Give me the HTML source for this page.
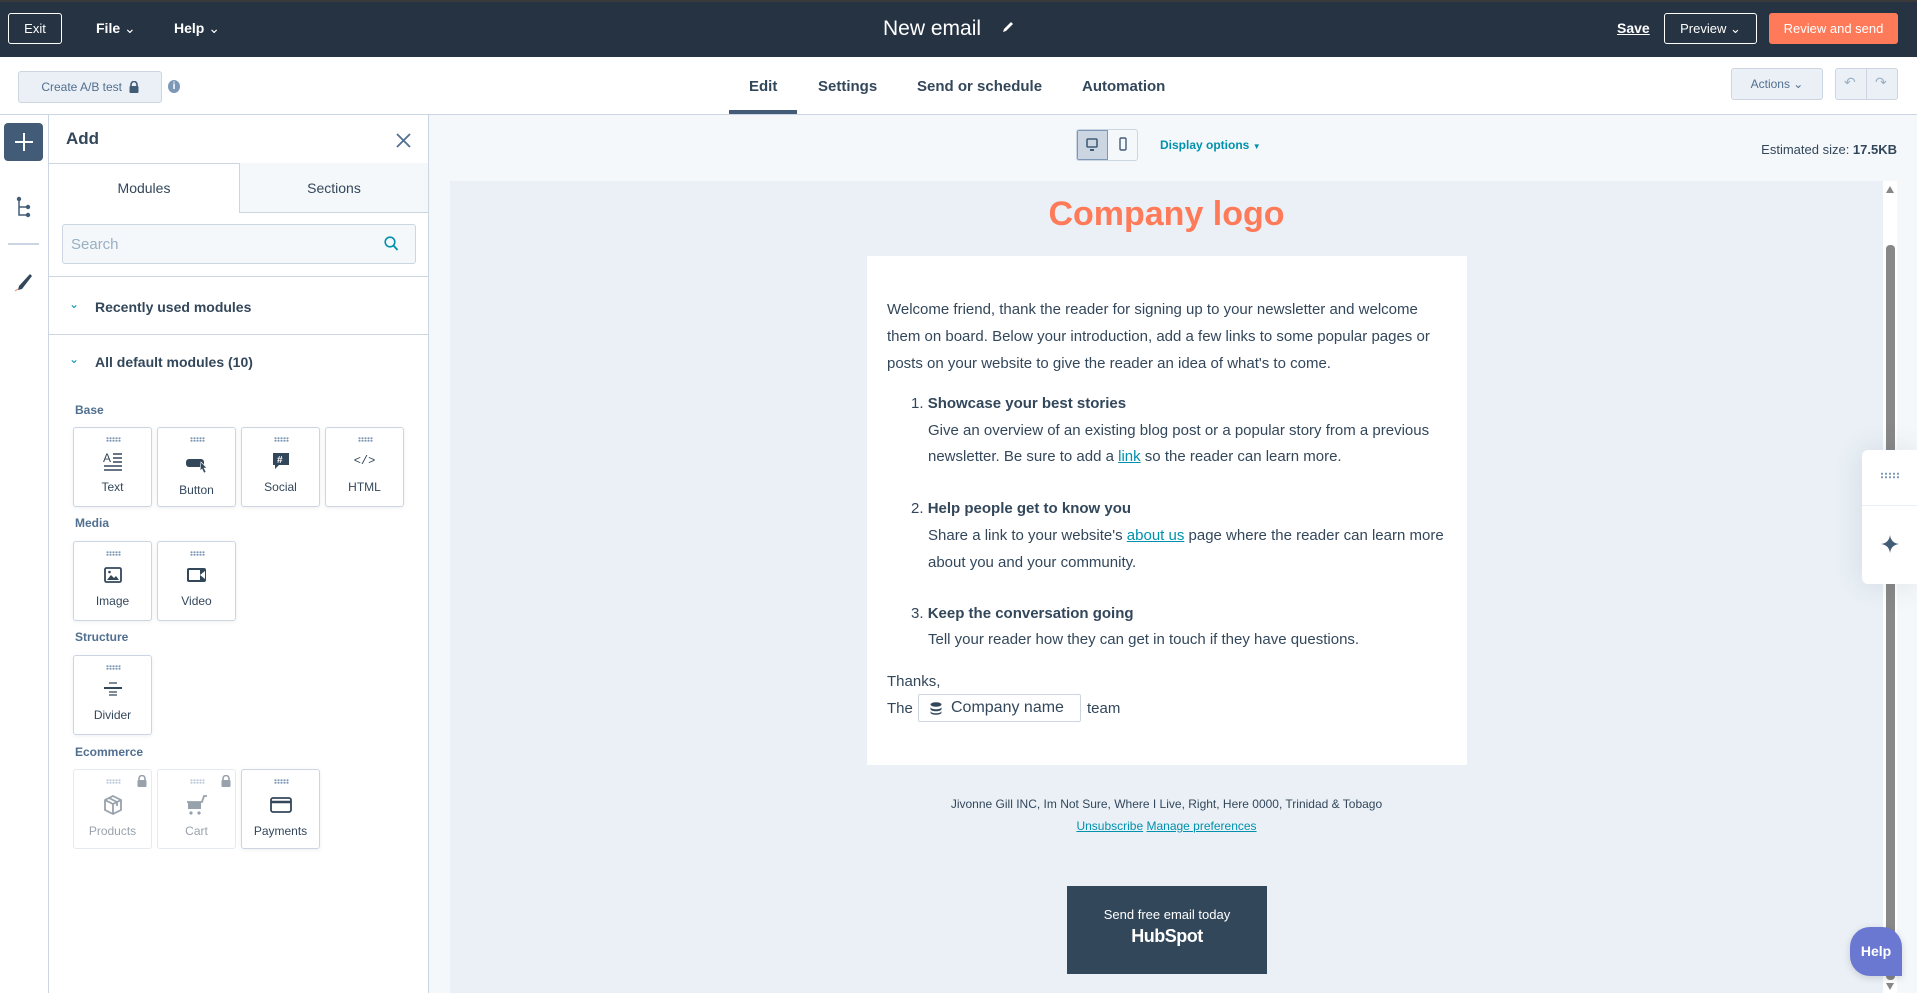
<!DOCTYPE html>
<html><head><meta charset="utf-8"><style>
*{box-sizing:border-box;margin:0;padding:0}
body{width:1917px;height:993px;overflow:hidden;position:relative;font-family:"Liberation Sans",sans-serif;color:#33475b;background:#f5f8fa}
.a{position:absolute}
.top{left:0;top:0;width:1917px;height:57px;background:#253342;border-top:2px solid #3a3a3a}
.btnw{border:1px solid #fff;border-radius:3px;color:#fff;font-size:13px;display:flex;align-items:center;justify-content:center}
.sub{left:0;top:57px;width:1917px;height:58px;background:#fff;border-bottom:1px solid #cbd6e2}
.tab{top:77px;font-size:15px;font-weight:bold;color:#33475b}
.tile{width:79px;height:80px;border:1px solid #cbd6e2;border-radius:3px;background:#fff;box-shadow:0 1px 4px rgba(45,62,80,.08)}
.tile .d{position:absolute;left:32px;top:9px;width:15px;height:5px;background-image:radial-gradient(circle,#7c98b6 0.9px,transparent 1.1px);background-size:3px 2.5px}
.tile .ic{position:absolute;left:0;width:77px;top:20px;height:26px;display:flex;align-items:center;justify-content:center}
.tile .l{position:absolute;left:0;width:77px;text-align:center;font-size:12px;top:52px;color:#33475b}
.lab{left:75px;font-size:12px;font-weight:bold;color:#516f90}
.ln{position:absolute;left:20px;font-size:15px;line-height:26px;white-space:nowrap;color:#33475b}
.ln.i{left:61px}
a{color:#0091ae;text-decoration:underline}
</style></head><body>
<div class="a top"></div>
<div class="a btnw" style="left:8px;top:13px;width:54px;height:31px">Exit</div>
<div class="a" style="left:96px;top:20px;color:#fff;font-size:14px;font-weight:bold">File <span style="font-weight:normal">&#8964;</span></div>
<div class="a" style="left:174px;top:20px;color:#fff;font-size:14px;font-weight:bold">Help <span style="font-weight:normal">&#8964;</span></div>
<div class="a" style="left:883px;top:17px;color:#fff;font-size:21px">New email</div>
<svg class="a" style="left:1001px;top:20px" width="14" height="14" viewBox="0 0 14 14"><path d="M2 12l1-3 7-7 2 2-7 7z" fill="#fff"/></svg>
<div class="a" style="left:1617px;top:20px;color:#fff;font-size:14px;font-weight:bold;text-decoration:underline">Save</div>
<div class="a btnw" style="left:1664px;top:13px;width:93px;height:31px">Preview &#8964;</div>
<div class="a" style="left:1769px;top:13px;width:129px;height:31px;background:#ff7a59;border-radius:3px;color:#fff;font-size:13px;display:flex;align-items:center;justify-content:center">Review and send</div>

<div class="a sub"></div>
<div class="a" style="left:18px;top:71px;width:144px;height:32px;background:#eaf0f6;border:1px solid #cbd6e2;border-radius:3px;font-size:12px;color:#516f90;display:flex;align-items:center;justify-content:center">Create A/B test &nbsp;<svg width="10" height="12" viewBox="0 0 10 12"><path d="M2 5V3.5a3 3 0 016 0V5" stroke="#425b76" stroke-width="1.6" fill="none"/><rect x="0.5" y="5" width="9" height="7" rx="1" fill="#425b76"/></svg></div>
<div class="a" style="left:168px;top:80px;width:12px;height:13px;border-radius:50%;background:#7c98b6;color:#fff;font-size:10px;font-weight:bold;text-align:center;line-height:13px">i</div>
<div class="a tab" style="left:749px;top:78px">Edit</div>
<div class="a" style="left:729px;top:110px;width:68px;height:4px;background:#425b76"></div>
<div class="a tab" style="left:818px;top:78px">Settings</div>
<div class="a tab" style="left:917px;top:78px">Send or schedule</div>
<div class="a tab" style="left:1082px;top:78px">Automation</div>
<div class="a" style="left:1731px;top:68px;width:92px;height:32px;background:#eaf0f6;border:1px solid #cbd6e2;border-radius:3px;font-size:12px;color:#516f90;display:flex;align-items:center;justify-content:center">Actions &#8964;</div>
<div class="a" style="left:1835px;top:68px;width:63px;height:32px;background:#eaf0f6;border:1px solid #cbd6e2;border-radius:3px"></div>
<div class="a" style="left:1866px;top:68px;width:1px;height:32px;background:#cbd6e2"></div>
<div class="a" style="left:1844px;top:74px;font-size:14px;color:#99afc4">&#8630;</div>
<div class="a" style="left:1875px;top:74px;font-size:14px;color:#99afc4">&#8631;</div>

<!-- rail -->
<div class="a" style="left:0;top:115px;width:49px;height:878px;background:#fff;border-right:1px solid #cbd6e2"></div>
<div class="a" style="left:4px;top:123px;width:39px;height:38px;background:#425b76;border-radius:4px"></div>
<svg class="a" style="left:14px;top:132px" width="20" height="20" viewBox="0 0 20 20"><path d="M10 1v18M1 10h18" stroke="#fff" stroke-width="2"/></svg>
<svg class="a" style="left:16px;top:196px" width="16" height="22" viewBox="0 0 16 22"><path d="M3 2v17h9M3 11h9" stroke="#425b76" stroke-width="1.5" fill="none"/><circle cx="3" cy="3" r="2.2" fill="#425b76"/><circle cx="12" cy="11" r="2.2" fill="#425b76"/><circle cx="12" cy="19" r="2.2" fill="#425b76"/></svg>
<div class="a" style="left:8px;top:243px;width:31px;height:2px;background:#cbd6e2"></div>
<svg class="a" style="left:13px;top:272px" width="20" height="20" viewBox="0 0 20 20"><path d="M17 2L6 14l-1 4 4-1L19 4z" fill="#33475b"/><path d="M2 19l3-2" stroke="#ff7a59" stroke-width="1"/></svg>

<!-- panel -->
<div class="a" style="left:49px;top:115px;width:380px;height:878px;background:#fff;border-right:1px solid #cbd6e2"></div>
<div class="a" style="left:66px;top:129px;font-size:17px;font-weight:bold;color:#33475b">Add</div>
<svg class="a" style="left:396px;top:133px" width="15" height="15" viewBox="0 0 15 15"><path d="M1 1l13 13M14 1L1 14" stroke="#516f90" stroke-width="1.8"/></svg>
<div class="a" style="left:49px;top:163px;width:379px;height:1px;background:#cbd6e2"></div>
<div class="a" style="left:49px;top:164px;width:190px;height:49px;font-size:14px;text-align:center;line-height:49px;color:#33475b">Modules</div>
<div class="a" style="left:239px;top:163px;width:189px;height:50px;background:#f5f8fa;border-left:1px solid #cbd6e2;border-bottom:1px solid #cbd6e2;font-size:14px;text-align:center;line-height:50px;color:#33475b">Sections</div>
<div class="a" style="left:62px;top:224px;width:354px;height:40px;background:#f5f8fa;border:1px solid #cbd6e2;border-radius:3px;font-size:15px;color:#99afc4;padding-left:8px;line-height:39px">Search</div>
<svg class="a" style="left:384px;top:236px" width="15" height="16" viewBox="0 0 15 16"><circle cx="6" cy="6" r="4.8" stroke="#0091ae" stroke-width="1.6" fill="none"/><path d="M9.5 9.5L13.5 14" stroke="#0091ae" stroke-width="1.8"/></svg>
<div class="a" style="left:49px;top:276px;width:379px;height:1px;background:#cbd6e2"></div>
<div class="a" style="left:69px;top:297px;font-size:12px;color:#0091ae">&#8964;</div>
<div class="a" style="left:95px;top:299px;font-size:14px;font-weight:bold">Recently used modules</div>
<div class="a" style="left:49px;top:334px;width:379px;height:1px;background:#cbd6e2"></div>
<div class="a" style="left:69px;top:352px;font-size:12px;color:#0091ae">&#8964;</div>
<div class="a" style="left:95px;top:354px;font-size:14px;font-weight:bold">All default modules (10)</div>

<div class="a lab" style="top:403px">Base</div>
<div class="a tile" style="left:73px;top:427px"><div class="d"></div><div class="ic"><svg width="20" height="20" viewBox="0 0 20 20"><text x="0" y="11" font-size="12" font-family="Liberation Sans" fill="#33475b">A</text><path d="M10 3h9M10 7h9M10 11h9M1 15h18M1 19h18" stroke="#33475b" stroke-width="1.4"/></svg></div><div class="l">Text</div></div>
<div class="a tile" style="left:157px;top:427px"><div class="d"></div><div class="ic" style="top:24px"><svg width="24" height="18" viewBox="0 0 24 18"><rect x="1" y="3" width="18" height="8" rx="3" fill="#33475b"/><path d="M16 6l6 6-3 0 2 4-2 1-2-4-2 2z" fill="#33475b" stroke="#fff" stroke-width=".6"/></svg></div><div class="l" style="top:55px">Button</div></div>
<div class="a tile" style="left:241px;top:427px"><div class="d"></div><div class="ic"><svg width="20" height="20" viewBox="0 0 20 20"><path d="M2 2h16v12H8l-4 4v-4H2z" fill="#33475b"/><text x="6" y="12" font-size="10" font-family="Liberation Sans" font-weight="bold" fill="#fff">#</text></svg></div><div class="l">Social</div></div>
<div class="a tile" style="left:325px;top:427px"><div class="d"></div><div class="ic" style="font-size:12px;font-family:'Liberation Mono',monospace;color:#33475b">&lt;/&gt;</div><div class="l">HTML</div></div>

<div class="a lab" style="top:516px">Media</div>
<div class="a tile" style="left:73px;top:541px"><div class="d"></div><div class="ic"><svg width="18" height="16" viewBox="0 0 18 16"><rect x="1" y="1" width="16" height="14" rx="1.5" stroke="#33475b" stroke-width="1.8" fill="none"/><path d="M3 13l4-5 3 3 2-2 3 4z" fill="#33475b"/><circle cx="5.5" cy="5" r="1.3" fill="#33475b"/></svg></div><div class="l">Image</div></div>
<div class="a tile" style="left:157px;top:541px"><div class="d"></div><div class="ic"><svg width="21" height="16" viewBox="0 0 21 16"><rect x="1" y="1" width="19" height="14" rx="2" fill="#33475b"/><rect x="3" y="3" width="11" height="10" fill="#fff"/><path d="M14 8l5-4v8z" fill="#fff"/></svg></div><div class="l">Video</div></div>

<div class="a lab" style="top:630px">Structure</div>
<div class="a tile" style="left:73px;top:655px"><div class="d"></div><div class="ic"><svg width="20" height="16" viewBox="0 0 20 16"><path d="M6 2h8M6 11h8M6 14h8" stroke="#33475b" stroke-width="1.3"/><path d="M1 7h18" stroke="#33475b" stroke-width="2"/></svg></div><div class="l">Divider</div></div>

<div class="a lab" style="top:745px">Ecommerce</div>
<div class="a tile" style="left:73px;top:769px;opacity:.5;box-shadow:none"><div class="d"></div><svg class="a" style="left:62px;top:5px" width="12" height="12" viewBox="0 0 10 12"><path d="M2 5V3.5a3 3 0 016 0V5" stroke="#33475b" stroke-width="1.6" fill="none"/><rect x="0.5" y="5" width="9" height="7" rx="1" fill="#33475b"/></svg><div class="ic" style="top:22px"><svg width="22" height="22" viewBox="0 0 22 22"><path d="M11 2l8 4v10l-8 4-8-4V6z M3 6l8 4 8-4 M11 10v10 M7 4l8 4v4" stroke="#33475b" stroke-width="1.8" fill="none"/></svg></div><div class="l" style="top:54px">Products</div></div>
<div class="a tile" style="left:157px;top:769px;opacity:.5;box-shadow:none"><div class="d"></div><svg class="a" style="left:62px;top:5px" width="12" height="12" viewBox="0 0 10 12"><path d="M2 5V3.5a3 3 0 016 0V5" stroke="#33475b" stroke-width="1.6" fill="none"/><rect x="0.5" y="5" width="9" height="7" rx="1" fill="#33475b"/></svg><div class="ic" style="top:22px"><svg width="22" height="22" viewBox="0 0 22 22"><path d="M1 8h15l2-6h3" stroke="#33475b" stroke-width="1.8" fill="none"/><rect x="2" y="8" width="13" height="7" fill="#33475b"/><circle cx="5" cy="19" r="1.6" fill="#33475b"/><circle cx="13" cy="19" r="1.6" fill="#33475b"/></svg></div><div class="l" style="top:54px">Cart</div></div>
<div class="a tile" style="left:241px;top:769px"><div class="d"></div><div class="ic" style="top:22px"><svg width="22" height="16" viewBox="0 0 22 16"><rect x="1" y="1" width="20" height="14" rx="2" stroke="#33475b" stroke-width="1.8" fill="none"/><path d="M1 5h20" stroke="#33475b" stroke-width="2.5"/></svg></div><div class="l" style="top:54px">Payments</div></div>

<!-- canvas -->
<div class="a" style="left:1076px;top:129px;width:62px;height:32px;border:1px solid #cbd6e2;border-radius:3px;background:#f5f8fa;overflow:hidden"><div style="width:31px;height:30px;background:#cbd6e2;border:1px solid #7c98b6"></div></div>
<svg class="a" style="left:1086px;top:138px" width="12" height="13" viewBox="0 0 12 13"><rect x="1" y="1" width="10" height="8" rx="1" stroke="#425b76" stroke-width="1.6" fill="none"/><path d="M4 12h4" stroke="#425b76" stroke-width="2"/></svg>
<svg class="a" style="left:1119px;top:137px" width="8" height="14" viewBox="0 0 8 14"><rect x="1" y="1" width="6" height="12" rx="1.2" stroke="#425b76" stroke-width="1.4" fill="none"/></svg>
<div class="a" style="left:1160px;top:138px;font-size:12px;font-weight:bold;color:#0091ae">Display options <span style="font-size:8px">&#9660;</span></div>
<div class="a" style="right:20px;top:142px;font-size:13px;color:#33475b">Estimated size: <b>17.5KB</b></div>

<div class="a" style="left:450px;top:181px;width:1433px;height:812px;background:#eaf0f6"></div>
<div class="a" style="left:450px;top:195px;width:1433px;text-align:center;font-size:34px;font-weight:bold;color:#ff7a59">Company logo</div>
<div class="a" style="left:867px;top:256px;width:600px;height:509px;background:#fff">
<div class="ln" style="top:41px">Welcome friend, thank the reader for signing up to your newsletter and welcome</div>
<div class="ln" style="top:68px">them on board. Below your introduction, add a few links to some popular pages or</div>
<div class="ln" style="top:95px">posts on your website to give the reader an idea of what's to come.</div>
<div class="ln" style="top:135px;left:44px">1. <b>Showcase your best stories</b></div>
<div class="ln i" style="top:162px">Give an overview of an existing blog post or a popular story from a previous</div>
<div class="ln i" style="top:188px">newsletter. Be sure to add a <a>link</a> so the reader can learn more.</div>
<div class="ln" style="top:240px;left:44px">2. <b>Help people get to know you</b></div>
<div class="ln i" style="top:267px">Share a link to your website's <a>about us</a> page where the reader can learn more</div>
<div class="ln i" style="top:294px">about you and your community.</div>
<div class="ln" style="top:345px;left:44px">3. <b>Keep the conversation going</b></div>
<div class="ln i" style="top:371px">Tell your reader how they can get in touch if they have questions.</div>
<div class="ln" style="top:413px">Thanks,</div>
<div class="ln" style="top:440px">The</div>
<div class="a" style="left:51px;top:438px;width:163px;height:28px;border:1px solid #cbd6e2;border-radius:2px;font-size:16px;line-height:26px;padding-left:32px;color:#33475b">Company name</div>
<svg class="a" style="left:63px;top:446px" width="12" height="13" viewBox="0 0 12 13"><ellipse cx="6" cy="2.5" rx="5.5" ry="2.3" fill="#33475b"/><path d="M0.5 5c0 3 11 3 11 0v2c0 3-11 3-11 0zM0.5 9c0 3 11 3 11 0v1.5c0 3-11 3-11 0z" fill="#33475b"/></svg>
<div class="ln" style="top:440px;left:220px">team</div>
</div>
<div class="a" style="left:450px;top:797px;width:1433px;text-align:center;font-size:12px;color:#33475b">Jivonne Gill INC, Im Not Sure, Where I Live, Right, Here 0000, Trinidad &amp; Tobago</div>
<div class="a" style="left:450px;top:819px;width:1433px;text-align:center;font-size:12px"><a>Unsubscribe</a> <a>Manage preferences</a></div>
<div class="a" style="left:1067px;top:886px;width:200px;height:88px;background:#33475b;text-align:center;color:#fff">
<div style="font-size:13px;margin-top:21px">Send free email today</div>
<div style="font-size:18px;font-weight:bold;margin-top:4px;letter-spacing:-.5px">HubSpot</div></div>

<!-- scrollbar -->
<div class="a" style="left:1883px;top:181px;width:14px;height:812px;background:#fff"></div>
<div class="a" style="left:1886px;top:186px;width:0;height:0;border-left:4px solid transparent;border-right:4px solid transparent;border-bottom:7px solid #888"></div>
<div class="a" style="left:1886px;top:245px;width:9px;height:735px;background:#888;border-radius:4px"></div>
<div class="a" style="left:1886px;top:983px;width:0;height:0;border-left:4px solid transparent;border-right:4px solid transparent;border-top:7px solid #888"></div>

<div class="a" style="left:1862px;top:450px;width:55px;height:134px;background:#fff;border-radius:6px 0 0 6px;box-shadow:0 0 30px rgba(45,62,80,.12)"></div>
<div class="a" style="left:1862px;top:505px;width:55px;height:1px;background:#eaf0f6"></div>
<div class="a" style="left:1880px;top:472px;width:20px;height:7px;background-image:radial-gradient(circle,#7c98b6 1px,transparent 1.2px);background-size:4px 3.5px"></div>
<svg class="a" style="left:1880px;top:534px" width="20" height="20" viewBox="0 0 20 20"><path d="M10 1Q11 9 19 10Q11 11 10 19Q9 11 1 10Q9 9 10 1z" fill="#425b76"/></svg>
<div class="a" style="left:1850px;top:927px;width:52px;height:49px;background:#6a78d1;border-radius:20px 20px 0 20px;color:#fff;font-size:14px;font-weight:bold;text-align:center;line-height:49px;box-shadow:0 2px 8px rgba(0,0,0,.15)">Help</div>
</body></html>
